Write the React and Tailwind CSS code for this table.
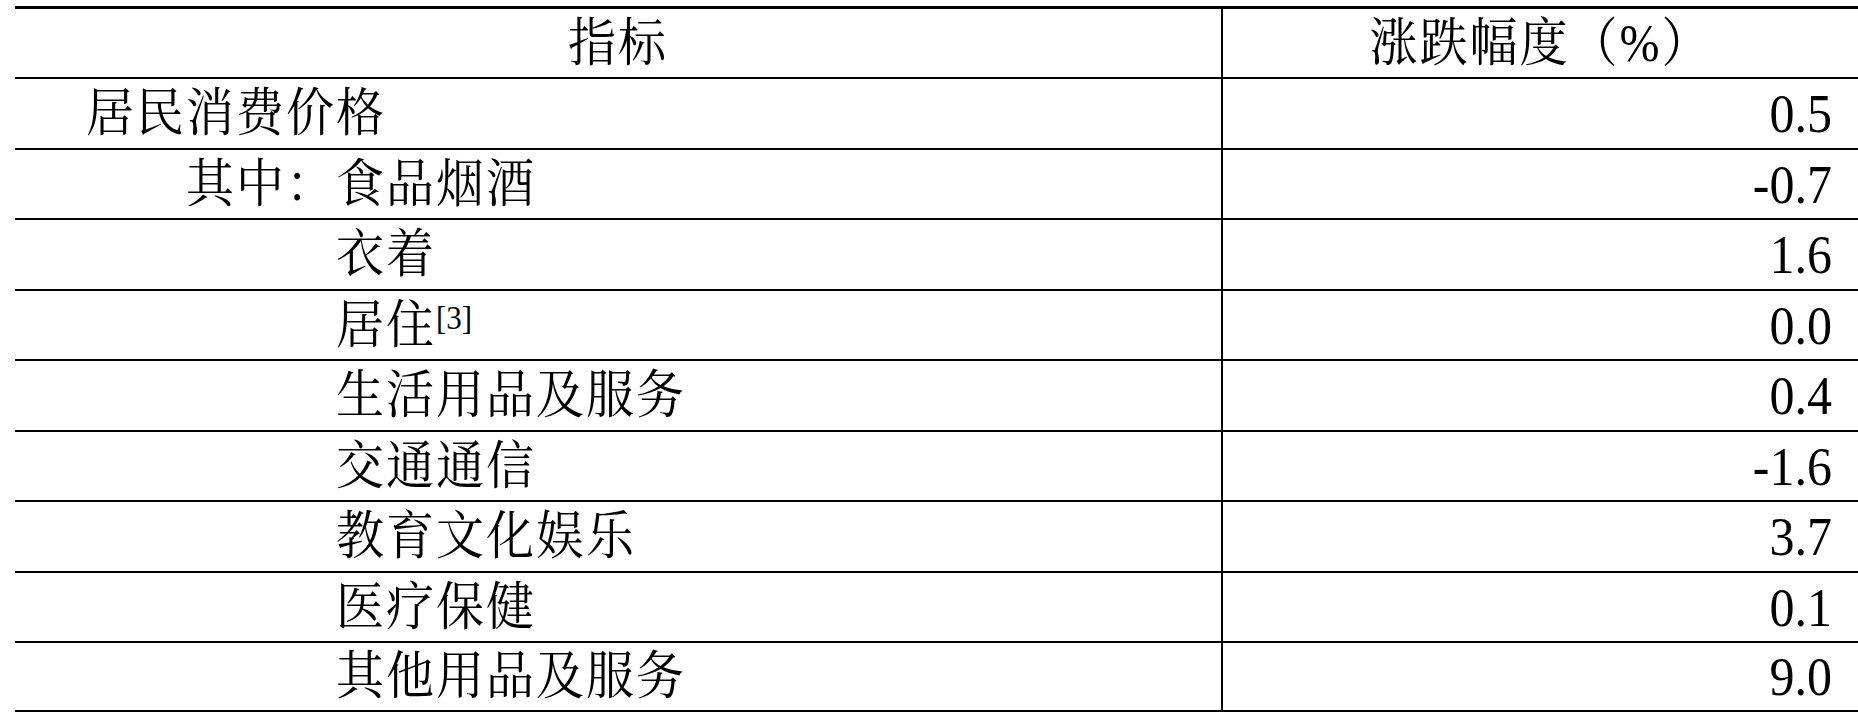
import React from "react";

const rows = [
  { label: "居民消费价格", value: "0.5", level: 0 },
  { label: "食品烟酒", value: "-0.7", level: 1 },
  { label: "衣着", value: "1.6", level: 2 },
  { label: "居住", note: "[3]", value: "0.0", level: 2 },
  { label: "生活用品及服务", value: "0.4", level: 2 },
  { label: "交通通信", value: "-1.6", level: 2 },
  { label: "教育文化娱乐", value: "3.7", level: 2 },
  { label: "医疗保健", value: "0.1", level: 2 },
  { label: "其他用品及服务", value: "9.0", level: 2 },
];

const font = {
  fontFamily:
    '"Liberation Serif", "Noto Serif CJK SC", "Noto Sans CJK SC", serif',
};

const Txt = ({ children, className = "" }) => (
  <span className={`inline-block origin-bottom scale-y-[1.1] ${className}`}>
    {children}
  </span>
);

const indent = ["pl-[71px]", "pl-[171px]", "pl-[321px]"];

export default function App() {
  return (
    <div className="bg-white w-[1858px] h-[716px] overflow-hidden pt-[6px] pl-[15px]">
      <div
        className="w-[1843px] text-black text-[48px] leading-none tracking-[2px]"
        style={font}
      >
        <div className="grid grid-cols-[1208px_1fr] h-[71px] border-t-[3px] border-black">
          <div className="flex items-center justify-center pt-[6px] border-r-2 border-black">
            <Txt>指标</Txt>
          </div>
          <div className="flex items-center justify-center pt-[6px]">
            <Txt>涨跌幅度（%）</Txt>
          </div>
        </div>
        {rows.map((row, i) => (
          <div
            key={row.label}
            className={`grid grid-cols-[1208px_1fr] h-[70.5px] border-t-2 border-black ${
              i === rows.length - 1 ? "border-b-2" : ""
            }`}
          >
            <div
              className={`flex items-center pt-[6px] border-r-2 border-black ${indent[row.level]}`}
            >
              <Txt>
                {row.level === 1 ? "其中：" : ""}
                {row.label}
                {row.note && (
                  <span className="inline-block align-baseline relative -top-[13px] text-[31px] tracking-normal">
                    {row.note}
                  </span>
                )}
              </Txt>
            </div>
            <div className="flex items-center justify-end pt-[6px] pr-[26px]">
              <Txt className="text-[50px] tracking-normal">{row.value}</Txt>
            </div>
          </div>
        ))}
      </div>
    </div>
  );
}
